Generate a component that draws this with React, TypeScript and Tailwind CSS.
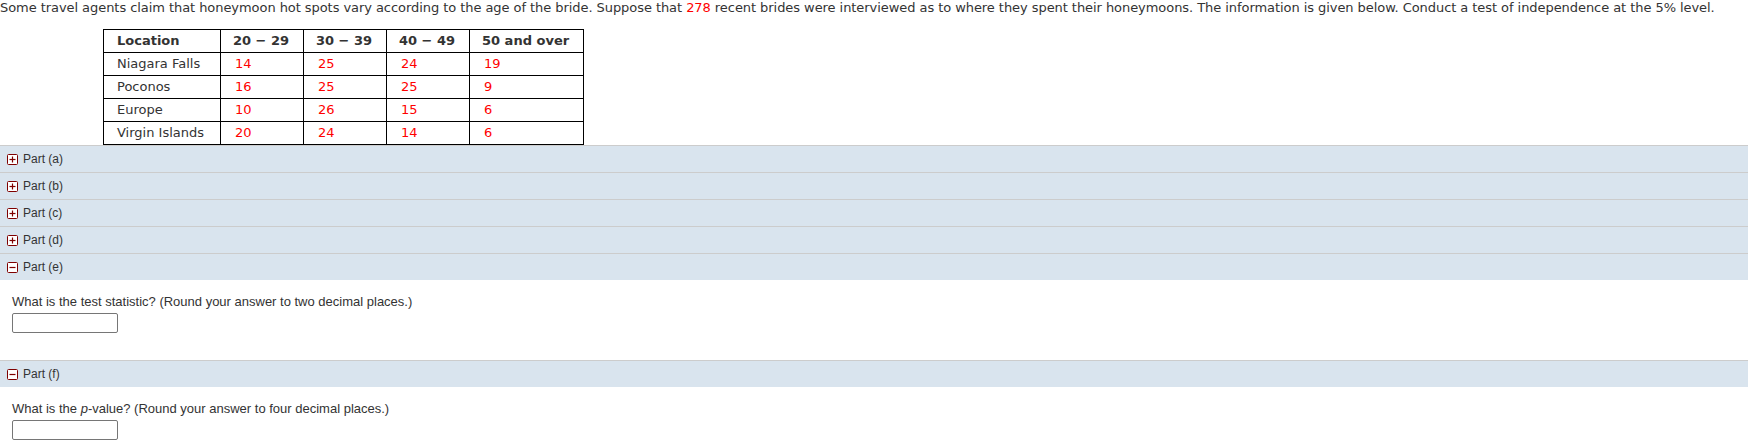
import React from "react";

const verdana = "font-['Verdana','DejaVu_Sans',sans-serif]";

function Icon({ open }: { open: boolean }) {
  return (
    <svg width="11" height="11" viewBox="0 0 11 11" className="shrink-0">
      <rect x="0.5" y="0.5" width="10" height="10" rx="1" fill="white" stroke="#7f0000" strokeWidth="1" />
      <line x1="2.5" y1="5.5" x2="8.5" y2="5.5" stroke="#7f0000" strokeWidth="1.2" />
      {!open && <line x1="5.5" y1="2.5" x2="5.5" y2="8.5" stroke="#7f0000" strokeWidth="1.2" />}
    </svg>
  );
}

function PartBar({ label, open }: { label: string; open: boolean }) {
  return (
    <div className="h-[27px] border-t border-[#cccccc] bg-[#d9e4ee] flex items-center gap-[5px] pl-[7px]">
      <Icon open={open} />
      <span className="text-[12px] text-[#333333]">{label}</span>
    </div>
  );
}

const rows: [string, number, number, number, number][] = [
  ["Niagara Falls", 14, 25, 24, 19],
  ["Poconos", 16, 25, 25, 9],
  ["Europe", 10, 26, 15, 6],
  ["Virgin Islands", 20, 24, 14, 6],
];

export default function App() {
  return (
    <div className="w-[1748px] h-[446px] bg-white overflow-hidden font-['Liberation_Sans',Arial,sans-serif]">
      <p className={`${verdana} text-[13px] leading-[16px] tracking-[-0.06px] text-[#333333] whitespace-nowrap`}>
        Some travel agents claim that honeymoon hot spots vary according to the age of the bride. Suppose that{" "}
        <span className="text-[#ff0000]">278</span> recent brides were interviewed as to where they spent their
        honeymoons. The information is given below. Conduct a test of independence at the 5% level.
      </p>
      <div className="pl-[103px] pt-[13px] pb-0">
        <table className={`${verdana} border-collapse text-[13px] text-[#333333]`}>
          <thead>
            <tr className="h-[23px]">
              <th className="w-[117px] border border-black text-left font-bold pl-[13px] py-0">Location</th>
              <th className="w-[83px] border border-black text-left font-bold pl-[12px] py-0">20 &minus; 29</th>
              <th className="w-[83px] border border-black text-left font-bold pl-[12px] py-0">30 &minus; 39</th>
              <th className="w-[83px] border border-black text-left font-bold pl-[12px] py-0">40 &minus; 49</th>
              <th className="w-[114px] border border-black text-left font-bold pl-[12px] py-0">50 and over</th>
            </tr>
          </thead>
          <tbody>
            {rows.map((r) => (
              <tr key={r[0]} className="h-[23px]">
                <td className="border border-black pl-[13px] py-0">{r[0]}</td>
                {r.slice(1).map((v, i) => (
                  <td key={i} className="border border-black pl-[14px] py-0 text-[#ff0000]">
                    {v}
                  </td>
                ))}
              </tr>
            ))}
          </tbody>
        </table>
      </div>
      <div className="mt-0">
        <PartBar label="Part (a)" open={false} />
        <PartBar label="Part (b)" open={false} />
        <PartBar label="Part (c)" open={false} />
        <PartBar label="Part (d)" open={false} />
        <PartBar label="Part (e)" open={true} />
        <div className="h-[80px] pl-[12px] pt-[14px] text-[13px] text-[#333333]">
          <div className="leading-[15px]">What is the test statistic? (Round your answer to two decimal places.)</div>
          <div className="mt-[4px] w-[106px] h-[20px] border border-[#767676] rounded-[2px]" />
        </div>
        <PartBar label="Part (f)" open={true} />
        <div className="pl-[12px] pt-[14px] text-[13px] text-[#333333]">
          <div className="leading-[15px]">
            What is the <i>p</i>-value? (Round your answer to four decimal places.)
          </div>
          <div className="mt-[4px] w-[106px] h-[20px] border border-[#767676] rounded-[2px]" />
        </div>
      </div>
    </div>
  );
}
